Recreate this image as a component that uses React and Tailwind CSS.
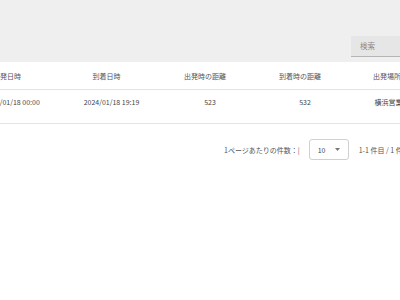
import React from 'react';

const cols = [
  { w: 'w-[100px]', head: '出発日時', cell: '2024/01/18 00:00' },
  { w: 'w-[99px]', head: '到着日時', cell: '2024/01/18 19:19' },
  { w: 'w-[98px]', head: '出発時の距離', cell: '523' },
  { w: 'w-[92px]', head: '到着時の距離', cell: '532' },
  { w: 'w-[82px]', head: '出発場所', cell: '横浜営業所' },
];

const font = { fontFamily: '"Noto Sans CJK JP", "Noto Sans", sans-serif' };

export default function App() {
  return (
    <div className="w-[400px] h-[300px] bg-white overflow-hidden text-[7px] leading-[10px]" style={font}>
      {/* top bar with search */}
      <div className="h-[62px] bg-[#efefef] flex justify-end items-start overflow-hidden">
        <div className="mt-[36px] mr-[-40px] w-[89px] h-[21px] bg-[#e6e6e6] border-b border-[#b5b5b5] flex items-center pl-[9px] text-[7.5px] text-[#8a8a8a] shrink-0">
          検索
        </div>
      </div>

      {/* table */}
      <div className="overflow-hidden">
        <div className="flex ml-[-38px] h-[28px] items-center border-b border-[#e4e4e4] text-[#555]">
          {cols.map((c) => (
            <div key={c.head} className={`${c.w} shrink-0 text-center pr-[10px] whitespace-nowrap`}>
              {c.head}
            </div>
          ))}
        </div>
        <div className="flex ml-[-38px] h-[34px] items-start pt-[7px] border-b border-[#e4e4e4] text-[#444]">
          {cols.map((c) => (
            <div key={c.head} className={`${c.w} shrink-0 text-center whitespace-nowrap`}>
              {c.cell}
            </div>
          ))}
        </div>
      </div>

      {/* pagination */}
      <div className="flex items-center mt-[15px] ml-[224px] whitespace-nowrap text-[#555]">
        <span>1ページあたりの件数：|</span>
        <div className="ml-[9px] w-[40px] h-[21px] border border-[#d0d0d0] rounded-[3px] flex items-center pl-[8px] shrink-0">
          <span className="text-[#444]">10</span>
          <svg className="ml-[10px]" width="5" height="3" viewBox="0 0 5 3">
            <path d="M0 0 L5 0 L2.5 3 Z" fill="#777" />
          </svg>
        </div>
        <span className="ml-[10px]">1-1 件目 / 1 件中</span>
      </div>
    </div>
  );
}
